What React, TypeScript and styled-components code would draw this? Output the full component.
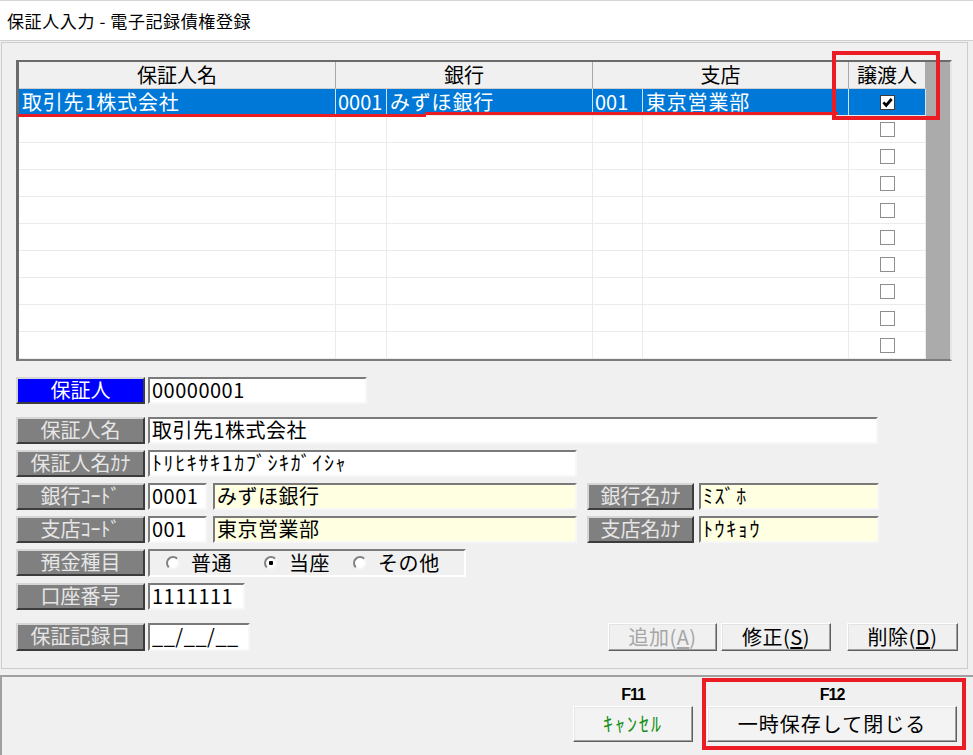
import styled, { createGlobalStyle } from "styled-components";

const GlobalStyle = createGlobalStyle`
  html, body {
    margin: 0;
    padding: 0;
    background: #f0f0f0;
  }
  body {
    font-family: "Noto Sans CJK JP", "Noto Sans", sans-serif;
    color: #000;
  }
`;

const JP = `"Noto Sans CJK JP", "Noto Sans CJK SC", sans-serif`;
const COLS = "317px 51px 206px 50px 206px 77px";

type GridRow = {
  name: string;
  bankCode: string;
  bankName: string;
  branchCode: string;
  branchName: string;
  checked: boolean;
  selected: boolean;
};

const rows: GridRow[] = [
  {
    name: "取引先1株式会社",
    bankCode: "0001",
    bankName: "みずほ銀行",
    branchCode: "001",
    branchName: "東京営業部",
    checked: true,
    selected: true,
  },
  ...Array.from({ length: 9 }, () => ({
    name: "",
    bankCode: "",
    bankName: "",
    branchCode: "",
    branchName: "",
    checked: false,
    selected: false,
  })),
];

const CheckMark = () => (
  <svg width="11" height="11" viewBox="0 0 11 11">
    <path d="M1.4 5.4 L4.2 8.4 L9.6 2" stroke="#000" strokeWidth="2.8" fill="none" />
  </svg>
);

const App = () => {
  return (
    <>
      <GlobalStyle />
      <Window>
        <TitleBar>保証人入力 - 電子記録債権登録</TitleBar>

        <MainPanel>
          <GridBox>
            <Table>
              <HeaderCell>保証人名</HeaderCell>
              <HeaderCell $span={2}>銀行</HeaderCell>
              <HeaderCell $span={2}>支店</HeaderCell>
              <HeaderCell>譲渡人</HeaderCell>
              {rows.map((r, i) => (
                <GridLine key={i}>
                  <Cell $sel={r.selected}>{r.name}</Cell>
                  <Cell $sel={r.selected} $tight>{r.bankCode}</Cell>
                  <Cell $sel={r.selected}>{r.bankName}</Cell>
                  <Cell $sel={r.selected} $tight>{r.branchCode}</Cell>
                  <Cell $sel={r.selected}>{r.branchName}</Cell>
                  <Cell $sel={r.selected} $center>
                    <CheckBox $checked={r.checked}>{r.checked && <CheckMark />}</CheckBox>
                  </Cell>
                </GridLine>
              ))}
            </Table>
          </GridBox>

          <Form>
            <Row>
              <FieldLabel $active>保証人</FieldLabel>
              <Field $width={219}>00000001</Field>
            </Row>
            <Row $spaced>
              <FieldLabel>保証人名</FieldLabel>
              <Field $width={730}>取引先1株式会社</Field>
            </Row>
            <Row>
              <FieldLabel>保証人名ｶﾅ</FieldLabel>
              <Field $width={429} $spacing={1.6}>
                ﾄﾘﾋｷｻｷ1ｶﾌﾞｼｷｶﾞｲｼｬ
              </Field>
            </Row>
            <Row>
              <FieldLabel>銀行ｺｰﾄﾞ</FieldLabel>
              <Field $width={59}>0001</Field>
              <Field $width={364} $ml={6} $yellow>
                みずほ銀行
              </Field>
              <FieldLabel $width={107} $ml={10} $mr={5}>
                銀行名ｶﾅ
              </FieldLabel>
              <Field $width={180} $yellow $spacing={1.6}>
                ﾐｽﾞﾎ
              </Field>
            </Row>
            <Row>
              <FieldLabel>支店ｺｰﾄﾞ</FieldLabel>
              <Field $width={59}>001</Field>
              <Field $width={364} $ml={6} $yellow>
                東京営業部
              </Field>
              <FieldLabel $width={107} $ml={10} $mr={5}>
                支店名ｶﾅ
              </FieldLabel>
              <Field $width={180} $yellow $spacing={1.6}>
                ﾄｳｷｮｳ
              </Field>
            </Row>
            <Row>
              <FieldLabel>預金種目</FieldLabel>
              <RadioGroup>
                <RadioItem $width={98}>
                  <RadioCircle />
                  普通
                </RadioItem>
                <RadioItem $width={89}>
                  <RadioCircle $checked />
                  当座
                </RadioItem>
                <RadioItem>
                  <RadioCircle />
                  その他
                </RadioItem>
              </RadioGroup>
            </Row>
            <Row>
              <FieldLabel>口座番号</FieldLabel>
              <Field $width={97}>1111111</Field>
            </Row>
            <Row $spaced>
              <FieldLabel $height={28}>保証記録日</FieldLabel>
              <Field $width={102} $height={28}>
                __/__/__
              </Field>
              <ButtonBar>
                <ActionButton $width={109} $disabled>
                  追加(<u>A</u>)
                </ActionButton>
                <ActionButton $width={110}>
                  修正(<u>S</u>)
                </ActionButton>
                <ActionButton $width={111} $ml={12}>
                  削除(<u>D</u>)
                </ActionButton>
              </ButtonBar>
            </Row>
          </Form>
        </MainPanel>

        <BottomBar>
          <FKeyGroup>
            <FKeyLabel>F11</FKeyLabel>
            <FooterButton $width={120} $color="#168f16" $spacing={2}>
              ｷｬﾝｾﾙ
            </FooterButton>
          </FKeyGroup>
          <FKeyGroup>
            <FKeyLabel>F12</FKeyLabel>
            <FooterButton $width={250} $spacing={1}>
              一時保存して閉じる
            </FooterButton>
          </FKeyGroup>
        </BottomBar>

        <MarkBox style={{ left: 832, top: 51, width: 108, height: 69 }} />
        <MarkLine style={{ left: 18, top: 114, width: 408 }} />
        <MarkLine style={{ left: 425, top: 112, width: 413 }} />
        <MarkBox style={{ left: 702, top: 678, width: 264, height: 72 }} />
      </Window>
    </>
  );
};

export default App;

const Window = styled.div`
  position: relative;
  width: 973px;
  height: 755px;
  overflow: hidden;
  background: #f0f0f0;
  display: flex;
  flex-direction: column;
`;

const TitleBar = styled.div`
  box-sizing: border-box;
  height: 41px;
  background: #fff;
  border-top: 1px solid #d4d4d4;
  border-bottom: 1px solid #d0d0d0;
  padding-left: 7px;
  display: flex;
  align-items: center;
  font-family: ${JP};
  font-size: 17px;
  letter-spacing: 0.6px;
  color: #000;
`;

const MainPanel = styled.div`
  box-sizing: border-box;
  width: 967px;
  height: 627px;
  margin: 1px 0 0 1px;
  border: 1px solid #cdcdcd;
  padding: 17px 9px 0 14px;
`;

const GridBox = styled.div`
  box-sizing: border-box;
  width: 936px;
  height: 301px;
  border-style: solid;
  border-width: 2px 2px 2px 3px;
  border-color: #6b6b6b #e6e6e6 #7c7c7c #6b6b6b;
  background: #ababab;
`;

const Table = styled.div`
  width: 907px;
  display: grid;
  grid-template-columns: ${COLS};
  grid-auto-rows: 27px;
`;

const HeaderCell = styled.div<{ $span?: number }>`
  grid-column: span ${(p) => p.$span ?? 1};
  box-sizing: border-box;
  background: #f0f0f0;
  border-right: 1px solid #a9a9a9;
  border-bottom: 1px solid #cfcfcf;
  text-align: center;
  font-family: ${JP};
  font-size: 20px;
  line-height: 26px;
  color: #000;
`;

const GridLine = styled.div`
  display: contents;
`;

const Cell = styled.div<{ $sel?: boolean; $center?: boolean; $tight?: boolean }>`
  box-sizing: border-box;
  display: flex;
  align-items: center;
  justify-content: ${(p) => (p.$center ? "center" : "flex-start")};
  padding-left: ${(p) => (p.$center ? 0 : p.$tight ? 2 : 3)}px;
  background: ${(p) => (p.$sel ? "#0078d7" : "#fff")};
  color: ${(p) => (p.$sel ? "#fff" : "#000")};
  border-right: 1px solid ${(p) => (p.$sel ? "#cfe3f5" : "#ebebeb")};
  border-bottom: 1px solid #ebebeb;
  font-family: ${JP};
  font-size: 20px;
  line-height: 26px;
  letter-spacing: ${(p) => (p.$tight ? 0 : 0.8)}px;
  white-space: nowrap;
`;

const CheckBox = styled.span<{ $checked?: boolean }>`
  box-sizing: border-box;
  width: 15px;
  height: 15px;
  display: inline-flex;
  align-items: center;
  justify-content: center;
  background: #fff;
  border: 1px solid ${(p) => (p.$checked ? "#3a3a3a" : "#8e8e8e")};
`;

const Form = styled.div`
  display: flex;
  flex-direction: column;
  gap: 6px;
  margin-top: 16px;
`;

const Row = styled.div<{ $spaced?: boolean }>`
  display: flex;
  align-items: flex-start;
  margin-top: ${(p) => (p.$spaced ? 7 : 0)}px;
`;

const FieldLabel = styled.div<{
  $active?: boolean;
  $width?: number;
  $height?: number;
  $ml?: number;
  $mr?: number;
}>`
  box-sizing: border-box;
  width: ${(p) => p.$width ?? 129}px;
  height: ${(p) => p.$height ?? 27}px;
  margin-left: ${(p) => p.$ml ?? 0}px;
  margin-right: ${(p) => p.$mr ?? 3}px;
  border: 2px solid;
  border-color: #d6d6d6 #3c3c3c #3c3c3c #d6d6d6;
  background: ${(p) => (p.$active ? "#0000ff" : "#808080")};
  color: ${(p) => (p.$active ? "#ffffff" : "#e6e6e6")};
  font-family: ${JP};
  font-size: 20px;
  line-height: 22px;
  text-align: center;
  white-space: nowrap;
`;

const Field = styled.div<{
  $width: number;
  $height?: number;
  $yellow?: boolean;
  $ml?: number;
  $spacing?: number;
}>`
  box-sizing: border-box;
  width: ${(p) => p.$width}px;
  height: ${(p) => p.$height ?? 27}px;
  margin-left: ${(p) => p.$ml ?? 0}px;
  border: 2px solid;
  border-color: #7a7a7a #f7f7f7 #f7f7f7 #7a7a7a;
  background: ${(p) => (p.$yellow ? "#ffffe1" : "#ffffff")};
  padding-left: 2px;
  font-family: ${JP};
  font-size: 20px;
  line-height: 22px;
  letter-spacing: ${(p) => p.$spacing ?? 0.5}px;
  color: #000;
  white-space: nowrap;
`;

const RadioGroup = styled.div`
  box-sizing: border-box;
  width: 318px;
  height: 28px;
  border: 2px solid;
  border-color: #7c7c7c #ffffff #ffffff #7c7c7c;
  background: #f0f0f0;
  padding-left: 16px;
  display: flex;
  align-items: center;
`;

const RadioItem = styled.div<{ $width?: number }>`
  width: ${(p) => (p.$width ? `${p.$width}px` : "auto")};
  display: flex;
  align-items: center;
  gap: 11px;
  font-family: ${JP};
  font-size: 20px;
  line-height: 24px;
  letter-spacing: 0.6px;
  color: #000;
`;

const RadioCircle = styled.span<{ $checked?: boolean }>`
  box-sizing: border-box;
  width: 14px;
  height: 14px;
  border-radius: 50%;
  border: 2px solid;
  border-color: #808080 #f4f4f4 #f4f4f4 #808080;
  background: ${(p) =>
    p.$checked ? "radial-gradient(circle, #000 0 2px, #fff 2.5px)" : "#fff"};
`;

const ButtonBar = styled.div`
  margin-left: auto;
  display: flex;
  gap: 4px;
`;

const ActionButton = styled.button<{ $width: number; $disabled?: boolean; $ml?: number }>`
  box-sizing: border-box;
  width: ${(p) => p.$width}px;
  height: 28px;
  margin-left: ${(p) => p.$ml ?? 0}px;
  padding: 0;
  background: #f0f0f0;
  border: 1px solid;
  border-color: #ffffff #5f5f5f #5f5f5f #ffffff;
  box-shadow: inset -1px -1px #a0a0a0, inset 1px 1px #e3e3e3;
  font-family: ${JP};
  font-size: 20px;
  line-height: 24px;
  letter-spacing: 0.5px;
  color: ${(p) => (p.$disabled ? "#a6a6a6" : "#000")};
  u {
    text-underline-offset: 2px;
  }
`;

const BottomBar = styled.div`
  box-sizing: border-box;
  height: 80px;
  margin-top: 6px;
  border-top: 2px solid #a0a0a0;
  border-left: 2px solid #a0a0a0;
  padding: 9px 16px 0 0;
  display: flex;
  justify-content: flex-end;
  gap: 14px;
`;

const FKeyGroup = styled.div`
  display: flex;
  flex-direction: column;
  align-items: center;
  gap: 3px;
`;

const FKeyLabel = styled.div`
  font-family: "Liberation Sans", Arial, sans-serif;
  font-weight: bold;
  font-size: 16px;
  letter-spacing: -1px;
  line-height: 17px;
  height: 17px;
  color: #000;
`;

const FooterButton = styled.button<{ $width: number; $color?: string; $spacing?: number }>`
  box-sizing: border-box;
  width: ${(p) => p.$width}px;
  height: 36px;
  padding: 0;
  background: #f3f3f3;
  border: 1px solid;
  border-color: #ffffff #5f5f5f #5f5f5f #ffffff;
  box-shadow: inset -1px -1px #a0a0a0, inset 1px 1px #e6e6e6;
  font-family: ${JP};
  font-size: 20px;
  line-height: 24px;
  letter-spacing: ${(p) => p.$spacing ?? 0}px;
  color: ${(p) => p.$color ?? "#000"};
`;

const MarkBox = styled.div`
  position: absolute;
  box-sizing: border-box;
  border: 4px solid #ec1c24;
  pointer-events: none;
`;

const MarkLine = styled.div`
  position: absolute;
  height: 3px;
  background: #ec1c24;
  pointer-events: none;
`;
